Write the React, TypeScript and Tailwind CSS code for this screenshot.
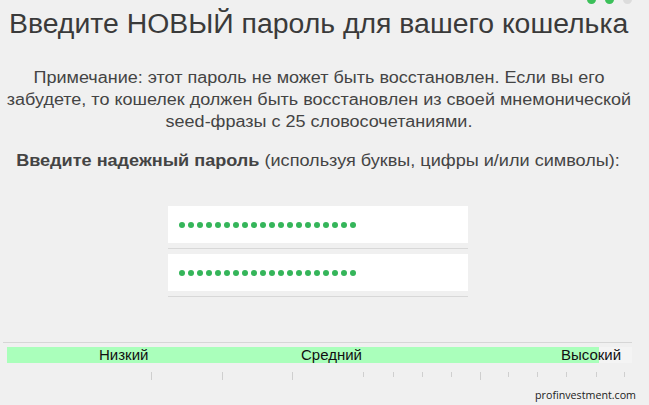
import React from "react";

const Dots = () => (
  <div className="flex items-center gap-[3px] pl-[11px]">
    {Array.from({ length: 20 }).map((_, i) => (
      <span key={i} className="block w-[6px] h-[6px] rounded-full bg-[#35b55a]" />
    ))}
  </div>
);

const ticks = [
  { x: 151.5, tall: true },
  { x: 222.5, tall: true },
  { x: 292.5, tall: true },
  { x: 363.5, tall: false },
  { x: 393.5, tall: false },
  { x: 422.5, tall: false },
  { x: 451.5, tall: false },
  { x: 480.5, tall: true },
  { x: 508.5, tall: false },
  { x: 537.5, tall: false },
  { x: 566.5, tall: false },
  { x: 596.5, tall: false },
  { x: 624.5, tall: false },
];

export default function App() {
  return (
    <div
      className="relative w-[649px] h-[405px] overflow-hidden bg-[#f0f0f0] text-[#3c3c3c]"
      style={{ fontFamily: '"Liberation Sans", Arial, sans-serif' }}
    >
      <div className="absolute top-[-5px] left-[587px] flex gap-[9px]">
        <span className="block w-[9px] h-[9px] rounded-full bg-[#3cc05a]" />
        <span className="block w-[9px] h-[9px] rounded-full bg-[#3cc05a]" />
        <span className="block w-[9px] h-[9px] rounded-full bg-[#dcdcdc]" />
      </div>

      <h1 className="pl-[9px] pt-[5px] text-[28.4px] leading-[36px] text-[#3a3a3a] whitespace-nowrap">
        Введите НОВЫЙ пароль для вашего кошелька
      </h1>

      <div className="mt-[26px] pr-[11px]">
        <p className="scale-x-[1.125] text-center text-[16px] leading-[22px] text-[#444] whitespace-nowrap">
          Примечание: этот пароль не может быть восстановлен. Если вы его
          <br />
          забудете, то кошелек должен быть восстановлен из своей мнемонической
          <br />
          seed-фразы с 25 словосочетаниями.
        </p>
      </div>

      <div className="mt-[17px] pr-[13px]">
        <p className="scale-x-[1.13] text-center text-[16px] leading-[22px] text-[#444] whitespace-nowrap">
          <b className="font-bold">Введите надежный пароль</b> (используя буквы, цифры и/или символы):
        </p>
      </div>

      <div className="mt-[34px] ml-[168px] w-[300px]">
        <div className="h-[37px] bg-white flex items-center">
          <Dots />
        </div>
        <div className="mt-[5px] h-[1px] bg-[#d8d8d8]" />
        <div className="mt-[5px] h-[37px] bg-white flex items-center">
          <Dots />
        </div>
        <div className="mt-[5px] h-[1px] bg-[#d8d8d8]" />
      </div>

      <div className="mt-[45px] ml-[3px] w-[629px] h-[1px] bg-[#d6d6d6]" />
      <div className="mt-[4px] ml-[7px] w-[625px] h-[16px] bg-[#f4f4f4] flex">
        <div className="relative w-[592px] h-full bg-[#aaffbb] text-[#111] text-[15px] leading-[16px]">
          <span className="absolute left-[92px] top-0">Низкий</span>
          <span className="absolute left-[294px] top-0">Средний</span>
          <span className="absolute left-[554px] top-0 whitespace-nowrap">Высокий</span>
        </div>
      </div>

      <svg className="mt-[8px] block" width="649" height="10">
        {ticks.map((t, i) => (
          <line
            key={i}
            x1={t.x}
            x2={t.x}
            y1={1}
            y2={t.tall ? 9 : 6}
            stroke="#cfcfcf"
            strokeWidth="1"
          />
        ))}
      </svg>

      <div
        className="absolute right-[13px] bottom-[2px] text-[10.7px] text-[#222]"
        style={{ fontFamily: '"Open Sans", "DejaVu Sans", sans-serif' }}
      >
        profinvestment.com
      </div>
    </div>
  );
}
